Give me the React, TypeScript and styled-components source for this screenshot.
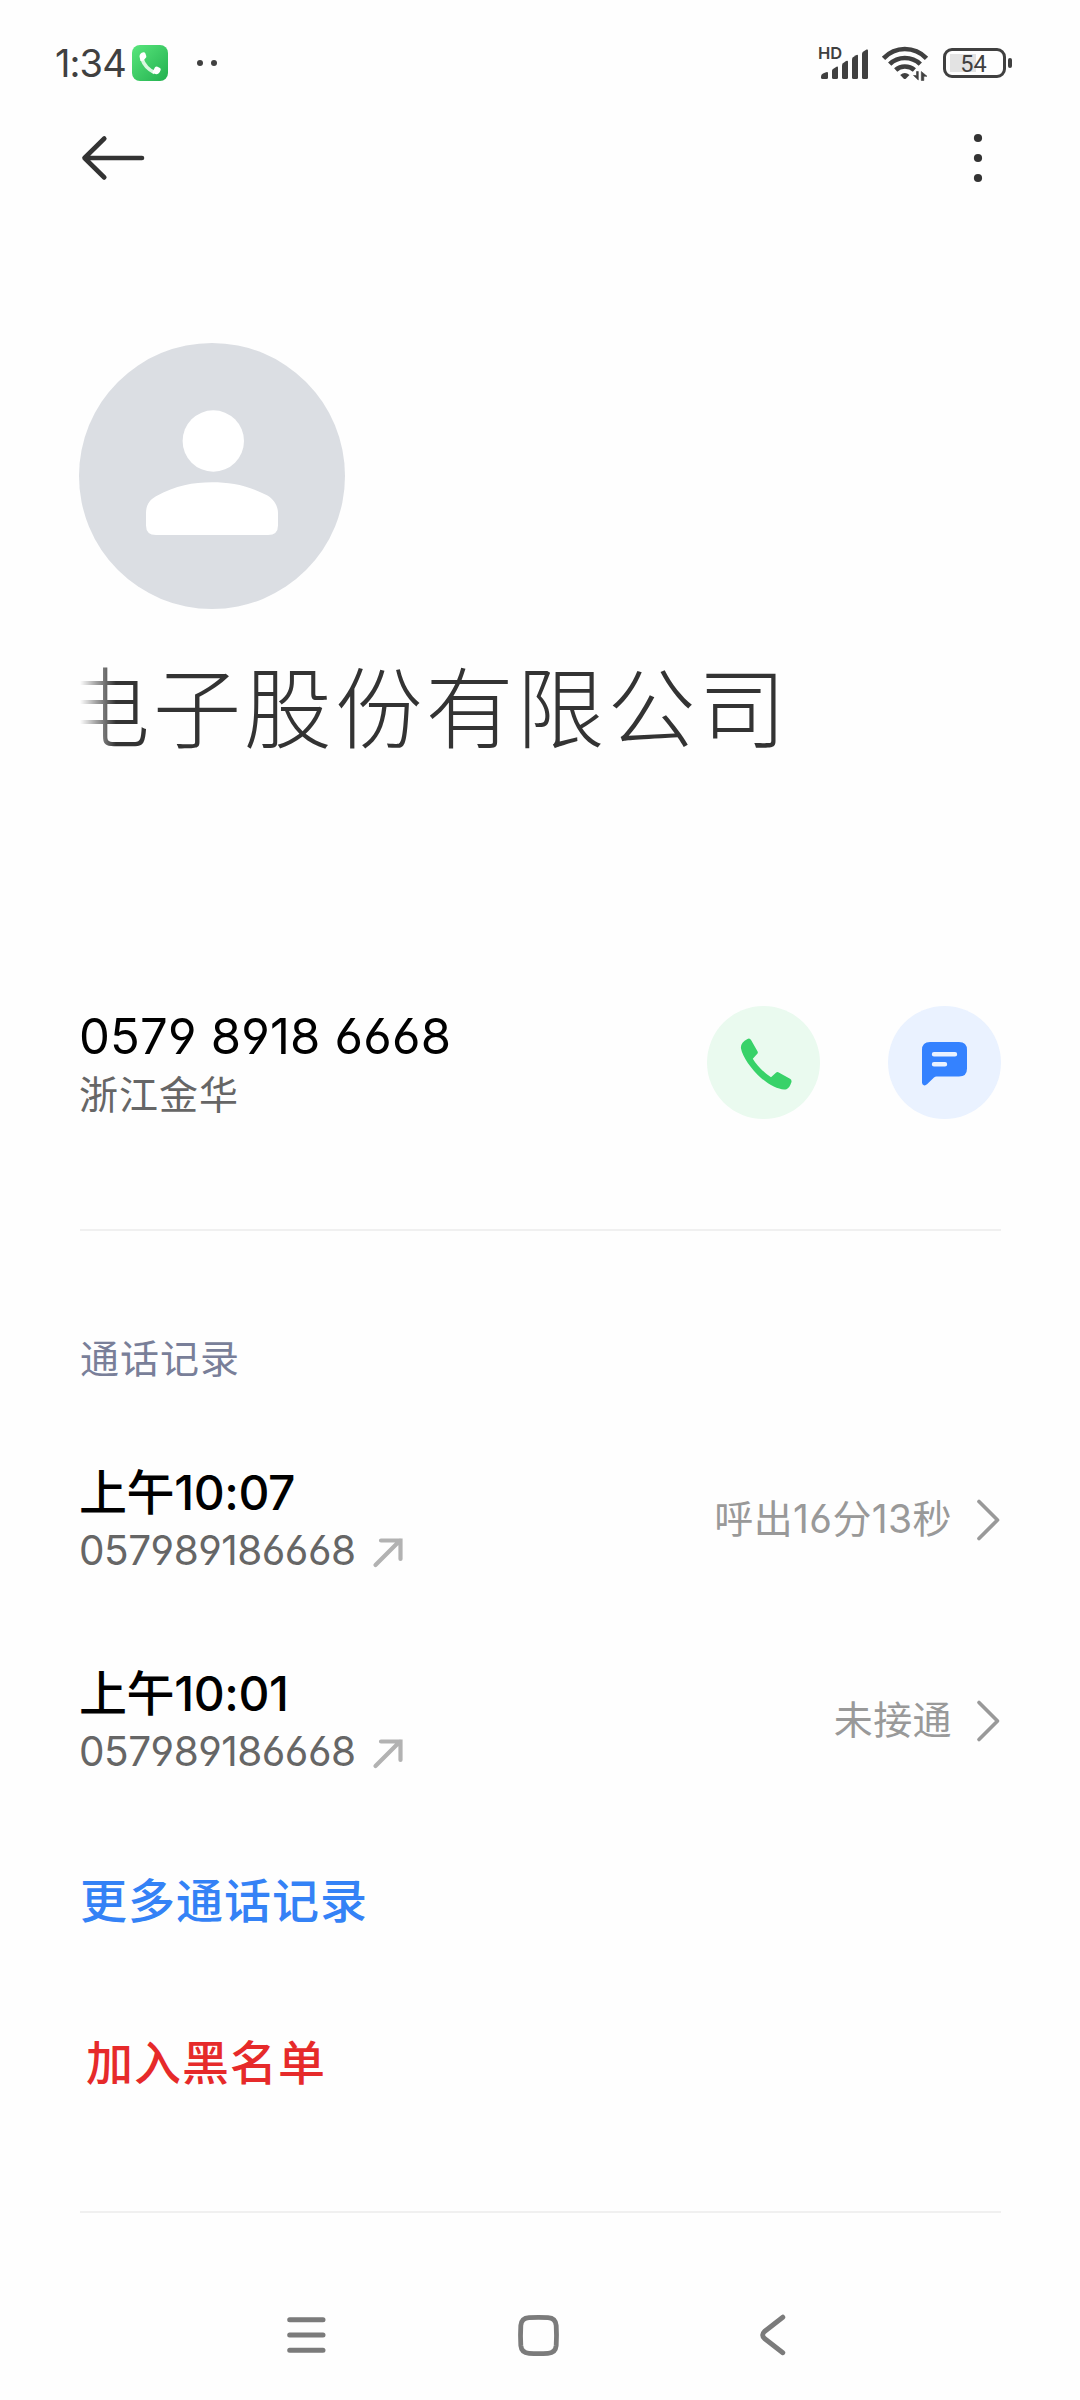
import React from 'react';
import styled, { createGlobalStyle } from 'styled-components';

const GlobalStyle = createGlobalStyle`
  * { box-sizing: border-box; }
  body { margin: 0; background: #fefefe; }
`;

const Screen = styled.main`
  display: flex;
  flex-direction: column;
  width: 1080px;
  height: 2400px;
  overflow: hidden;
  background: #fefefe;
  font-family: Inter, 'Noto Sans CJK SC', sans-serif;
  font-feature-settings: 'cv03' 1, 'cv04' 1;
  color: #000;
  white-space: nowrap;
`;

const Icon = styled.svg`
  display: block;
  flex: none;
  overflow: visible;
`;

const StatusBar = styled.header`
  display: flex;
  align-items: center;
  height: 126px;
  padding: 0 68px 0 55px;
`;

const Clock = styled.span`
  width: 77px;
  font-size: 38px;
  line-height: 50px;
  letter-spacing: -0.9px;
  color: #404040;
`;

const NotificationDots = styled.div`
  display: flex;
  gap: 8px;
  margin: 0 auto 0 29px;

  i {
    width: 6px;
    height: 6px;
    border-radius: 50%;
    background: #404040;
  }
`;

const Signal = styled.div`
  display: flex;
  align-items: flex-start;
  height: 34px;
  margin-right: 12px;
`;

const HdLabel = styled.span`
  width: 2px;
  margin-left: -3px;
  font: 600 16.5px/15px Inter, sans-serif;
  color: #404040;
`;

const Battery = styled.div`
  display: flex;
  align-items: center;
  gap: 2px;
  margin-left: 15px;
`;

const BatteryShell = styled.div`
  display: flex;
  align-items: center;
  justify-content: center;
  width: 63px;
  height: 30px;
  border: 3px solid #404040;
  border-radius: 9px;
  background: linear-gradient(#e3e3e3, #e3e3e3) 4px center / 26px 18px no-repeat;
  font: 400 23.5px/26px Roboto, sans-serif;
  padding: 2px 2px 0 0;
  color: #404040;
`;

const BatteryTip = styled.div`
  width: 4px;
  height: 10px;
  border-radius: 2px;
  background: #404040;
`;

const Toolbar = styled.div`
  display: flex;
  align-items: center;
  justify-content: space-between;
  height: 64px;
  padding: 0 98px 0 80px;
`;

const Content = styled.div`
  display: flex;
  flex-direction: column;
  padding: 0 79px 0 80px;
`;

const Avatar = styled.div`
  width: 266px;
  height: 266px;
  margin: 153px 0 43px -1px;
  border-radius: 50%;
  background: #dbdee3;
`;

const NameMarquee = styled.h1`
  width: 800px;
  height: 110px;
  margin: 0 0 0 -18px;
  font-size: 88px;
  font-weight: 300;
  line-height: 114px;
  letter-spacing: 2.9px;
  color: #333;
  mask-image: linear-gradient(to right, transparent 18px, #000 54px);
`;

const NumberRow = styled.section`
  display: flex;
  align-items: center;
  height: 113px;
  margin-top: 244px;
`;

const TextStack = styled.div`
  display: flex;
  flex-direction: column;
  gap: 4px;
  margin-right: auto;
`;

const Primary = styled.div<{ $size: number; $weight: number; $tracking: number }>`
  height: 60px;
  margin-left: -1px;
  font-size: ${(p) => p.$size}px;
  font-weight: ${(p) => p.$weight};
  line-height: 62px;
  letter-spacing: ${(p) => p.$tracking}px;
`;

const Secondary = styled.div<{ $cjk?: boolean }>`
  display: flex;
  align-items: center;
  gap: 17px;
  height: 50px;
  margin-left: -1px;
  font-size: ${(p) => (p.$cjk ? 39 : 40.5)}px;
  line-height: 54px;
  letter-spacing: ${(p) => (p.$cjk ? 1 : -0.5)}px;
  color: #666;
`;

const RoundButton = styled.button<{ $tint: string; $nudge?: number }>`
  display: grid;
  place-items: center;
  width: 113px;
  height: 113px;
  margin: 0 0 0 68px;
  padding: 2px 0 0 ${(p) => p.$nudge ?? 0}px;
  border: 0;
  border-radius: 50%;
  background: ${(p) => p.$tint};
`;

const Divider = styled.hr<{ $top: number }>`
  width: 921px;
  height: 2px;
  margin: ${(p) => p.$top}px 0 0;
  border: 0;
  background: #f0f0f0;
`;

const SectionTitle = styled.h2`
  margin: 103px 0 78px;
  font-size: 39px;
  font-weight: 400;
  line-height: 50px;
  letter-spacing: 1px;
  color: #797f99;
`;

const Records = styled.div`
  display: flex;
  flex-direction: column;
  gap: 87px;
`;

const Record = styled.div`
  display: flex;
  align-items: center;
  height: 114px;
`;

const Outcome = styled.span`
  margin-right: 25px;
  font-size: 39px;
  line-height: 50px;
  letter-spacing: 0.4px;
  color: #999;
`;

const TextAction = styled.a<{ $color: string; $left?: number }>`
  height: 60px;
  margin-left: ${(p) => p.$left ?? 0}px;
  font-size: 47px;
  font-weight: 500;
  line-height: 62px;
  letter-spacing: 1px;
  color: ${(p) => p.$color};
`;

const Actions = styled.div`
  display: flex;
  flex-direction: column;
  gap: 102px;
  margin-top: 93px;
`;

const NavBar = styled.nav`
  display: flex;
  align-items: center;
  height: 60px;
  margin-top: auto;
  margin-bottom: 35px;
  padding-left: 287px;
`;

const NavItem = styled.div<{ $width: number }>`
  width: ${(p) => p.$width}px;
`;

const calls = [
  { time: '上午10:07', number: '057989186668', outcome: '呼出16分13秒' },
  { time: '上午10:01', number: '057989186668', outcome: '未接通' },
];

const PhoneBadge = () => (
  <Icon width="36" height="36" viewBox="0 0 36 36">
    <defs>
      <linearGradient id="badge" x1="0" y1="0" x2="1" y2="1">
        <stop offset="0" stopColor="#58e67c" />
        <stop offset="1" stopColor="#23b04f" />
      </linearGradient>
    </defs>
    <rect width="36" height="36" rx="8" fill="url(#badge)" />
    <path d="M10 14C12 20 17 25 22.500 27.500" fill="none" stroke="#d9f8e0" strokeWidth="3.600" />
    <path d="M7.500 11.500Q7.500 8 11.500 7.200Q12.700 7 13.300 8.200L14.300 11Q14.700 12.300 13.400 13.300L11.500 15.500L8.500 16Z" fill="#fff" />
    <path d="M21 26L23 22.300Q24 21.200 25.500 21.800L28 23Q29.200 23.800 28.600 25.200Q27.200 29 24.200 29.200L20.500 28Z" fill="#fff" />
  </Icon>
);

const SignalBars = () => (
  <Icon width="50" height="34" viewBox="0 0 50 34" fill="#404040">
    <path d="M1 30.500Q1 28.500 3 27.500L6 26.200Q8 25.500 8 27V31.500Q8 33 6.500 33H2.500Q1 33 1 31.500Z" />
    <path d="M12 25Q12 23.700 13 23L16.500 20.700Q18 20 18 21.500V31.500Q18 33 16.500 33H13.500Q12 33 12 31.500Z" />
    <path d="M22 19.500Q22 18 23 17.200L26 15Q28 14 28 15.800V31.500Q28 33 26.500 33H23.500Q22 33 22 31.500Z" />
    <path d="M32 13.500Q32 12 33 11.200L36 9.200Q38 8 38 10V31.500Q38 33 36.500 33H33.500Q32 33 32 31.500Z" />
    <path d="M42 8Q42 6.500 43 5.700L46.500 3.600Q48 3 48 4.500V31.500Q48 33 46.500 33H43.500Q42 33 42 31.500Z" />
  </Icon>
);

const Wifi = () => (
  <Icon width="46" height="34" viewBox="0 0 46 34" fill="none" stroke="#404040">
    <path d="M1.500 12.300Q10.500 3 22.800 3Q35.500 3 44.500 12.300" strokeWidth="4.700" />
    <path d="M7.700 18.200Q14 12 22.800 12Q32 12 38.300 18.200" strokeWidth="4.700" />
    <path d="M13.700 24Q17.500 20.500 22.800 20.500Q28.500 20.500 32.400 24" strokeWidth="4.700" />
    <path d="M18.200 29Q22.800 25 27.500 29L23.800 32.700Q22.800 33.500 21.800 32.700Z" fill="#404040" stroke="none" />
    <path d="M36.300 25.500V34L31.500 29.500H34.500V25.500ZM39.300 34.500V25.500L45 30.300H41.800V34.500Z" fill="#404040" strokeWidth=".6" />
  </Icon>
);

const BackArrow = () => (
  <Icon width="64" height="44" viewBox="0 0 64 44" fill="none" stroke="#333" strokeWidth="4.600" strokeLinecap="round" strokeLinejoin="round">
    <path d="M24.300 2.500L4.500 22L24.300 41.500M4.500 22H62" />
  </Icon>
);

const MoreDots = () => (
  <Icon width="8" height="48" viewBox="0 0 8 48" fill="#333">
    <circle cx="4" cy="4" r="4.100" />
    <circle cx="4" cy="24" r="4.100" />
    <circle cx="4" cy="44" r="4.100" />
  </Icon>
);

const Person = () => (
  <Icon width="266" height="266" viewBox="0 0 266 266" fill="#fff">
    <circle cx="134.300" cy="98" r="30.700" />
    <path d="M67 170C67 162 71 156.500 77 153.300C97 142.500 114 139.300 133 139.300C152 139.300 169 142.500 188 152.300C194.500 156 199 162.500 199 170V182.500Q199 192 189 192H77Q67 192 67 182.500Z" />
  </Icon>
);

const CallGlyph = () => (
  <Icon width="52" height="52" viewBox="0 0 52 52" fill="#38d269">
    <path d="M7.500 .9Q9.800 -.3 11.200 2.200L17.600 13.600Q18.200 14.800 17.300 15.800L12.800 20.700C17 27.500 23 34 31 39.200L36.200 34.600Q37.200 33.700 38.300 34.300L50 40.700Q52.200 42 51.300 44.500Q49.500 50 46.500 51.200C40 52.500 30.500 48 21 40C11 31 2.500 18.500 1 10.500Q.2 4.500 7.500 .9Z" />
  </Icon>
);

const MessageGlyph = () => (
  <Icon width="46" height="44" viewBox="0 0 46 44">
    <path d="M8 0H37Q45 0 45 8V26.500Q45 34.500 37 34.500H14.500Q13 34.500 12 35.500L5 42.300Q3.500 43.800 1.800 43.300Q0 42.800 0 40.500V8Q0 0 8 0Z" fill="#3482ff" />
    <path d="M12 12.200H33M12 22.200H23" stroke="#eaf2ff" strokeWidth="4.400" strokeLinecap="round" />
  </Icon>
);

const OutgoingArrow = () => (
  <Icon width="30" height="30" viewBox="0 0 30 30" fill="none" stroke="#b2b2b2" strokeWidth="4.200" strokeLinecap="round">
    <path d="M2.500 29L27 4.500M8 4.500H27.500V23" />
  </Icon>
);

const Chevron = () => (
  <Icon width="24" height="40" viewBox="0 0 24 40" fill="none" stroke="#999" strokeWidth="3.700" strokeLinecap="round" strokeLinejoin="round">
    <path d="M2 2.500L20.500 21L2 39.500" />
  </Icon>
);

const MenuGlyph = () => (
  <Icon width="39" height="36" viewBox="0 0 39 36" stroke="#7b7b7b" strokeWidth="5" strokeLinecap="round">
    <path d="M2.700 2.700H36M2.700 18H36M2.700 33.300H36" />
  </Icon>
);

const HomeGlyph = () => (
  <Icon width="41" height="41" viewBox="0 0 41 41" fill="none" stroke="#7b7b7b" strokeWidth="4.800">
    <path d="M11 2.700Q20.500 2 30 2.700Q37.500 3.200 38.200 10.500Q38.800 20.500 38.200 30.500Q37.500 37.800 30 38.300Q20.500 39 11 38.300Q3.500 37.800 2.800 30.500Q2.200 20.500 2.800 10.500Q3.500 3.200 11 2.700Z" />
  </Icon>
);

const BackGlyph = () => (
  <Icon width="26" height="42" viewBox="0 0 26 42" fill="none" stroke="#7b7b7b" strokeWidth="4.900" strokeLinecap="round" strokeLinejoin="round">
    <path d="M22.800 3.200L4.500 17.500Q.8 21 4.500 24.500L22.800 38.700" />
  </Icon>
);

export default function App() {
  return (
    <Screen>
      <GlobalStyle />
      <StatusBar>
        <Clock>1:34</Clock>
        <PhoneBadge />
        <NotificationDots>
          <i />
          <i />
        </NotificationDots>
        <Signal>
          <HdLabel>HD</HdLabel>
          <SignalBars />
        </Signal>
        <Wifi />
        <Battery>
          <BatteryShell>54</BatteryShell>
          <BatteryTip />
        </Battery>
      </StatusBar>
      <Toolbar>
        <BackArrow />
        <MoreDots />
      </Toolbar>
      <Content>
        <Avatar>
          <Person />
        </Avatar>
        <NameMarquee>电子股份有限公司</NameMarquee>
        <NumberRow>
          <TextStack>
            <Primary $size={49} $weight={400} $tracking={0.2}>0579 8918 6668</Primary>
            <Secondary $cjk>浙江金华</Secondary>
          </TextStack>
          <RoundButton $tint="#eafaef" $nudge={4}>
            <CallGlyph />
          </RoundButton>
          <RoundButton $tint="#eaf2ff">
            <MessageGlyph />
          </RoundButton>
        </NumberRow>
        <Divider $top={110} />
        <SectionTitle>通话记录</SectionTitle>
        <Records>
          {calls.map((call) => (
            <Record key={call.time}>
              <TextStack>
                <Primary $size={48} $weight={450} $tracking={-0.4}>{call.time}</Primary>
                <Secondary>
                  {call.number}
                  <OutgoingArrow />
                </Secondary>
              </TextStack>
              <Outcome>{call.outcome}</Outcome>
              <Chevron />
            </Record>
          ))}
        </Records>
        <Actions>
          <TextAction $color="#3482f6">更多通话记录</TextAction>
          <TextAction $color="#e62a2a" $left={6}>加入黑名单</TextAction>
        </Actions>
        <Divider $top={119} />
      </Content>
      <NavBar>
        <NavItem $width={231}>
          <MenuGlyph />
        </NavItem>
        <NavItem $width={242}>
          <HomeGlyph />
        </NavItem>
        <BackGlyph />
      </NavBar>
    </Screen>
  );
}
